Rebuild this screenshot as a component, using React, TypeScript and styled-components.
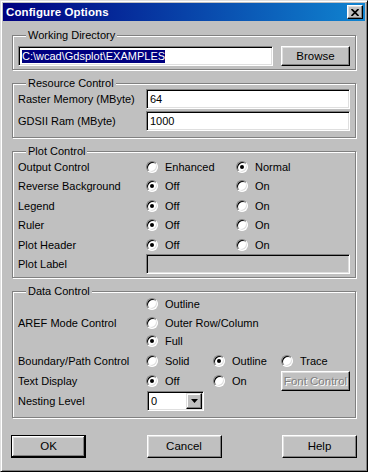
import { Fragment } from "react";
import styled, { createGlobalStyle } from "styled-components";

const GlobalStyle = createGlobalStyle`
  body {
    margin: 0;
    background: #fff;
    font-family: "Liberation Sans", Arial, sans-serif;
    font-size: 11px;
    color: #000;
  }
`;

type Option = { text: string; checked?: boolean };

const plotRows: { label: string; options: Option[] }[] = [
  { label: "Output Control", options: [{ text: "Enhanced" }, { text: "Normal", checked: true }] },
  { label: "Reverse Background", options: [{ text: "Off", checked: true }, { text: "On" }] },
  { label: "Legend", options: [{ text: "Off", checked: true }, { text: "On" }] },
  { label: "Ruler", options: [{ text: "Off", checked: true }, { text: "On" }] },
  { label: "Plot Header", options: [{ text: "Off", checked: true }, { text: "On" }] },
];

const arefOptions: Option[] = [
  { text: "Outline" },
  { text: "Outer Row/Column" },
  { text: "Full", checked: true },
];

const Radio = ({ text, checked = false }: Option) => (
  <RadioWrap>
    <RadioCircle $checked={checked} />
    <span>{text}</span>
  </RadioWrap>
);

const App = () => {
  return (
    <>
      <GlobalStyle />
      <Window>
        <TitleBar>
          <Title>Configure Options</Title>
          <CloseButton>
            <svg width="8" height="7" viewBox="0 0 8 7">
              <path d="M0.5 0 L7.5 7 M7.5 0 L0.5 7" stroke="#000" strokeWidth="1.7" />
            </svg>
          </CloseButton>
        </TitleBar>

        <Body>
          <Group $pad="5px 5px 3px">
            <Legend>Working Directory</Legend>
            <DirRow>
              <Field $width={255}>
                <Selected>C:\wcad\Gdsplot\EXAMPLES</Selected>
              </Field>
              <Button $width={69}>Browse</Button>
            </DirRow>
          </Group>

          <Group $pad="0 5px 6px">
            <Legend>Resource Control</Legend>
            <ResourceGrid>
              <Label>Raster Memory (MByte)</Label>
              <Field>64</Field>
              <Label>GDSII Ram (MByte)</Label>
              <Field>1000</Field>
            </ResourceGrid>
          </Group>

          <Group $pad="0 5px 3px">
            <Legend>Plot Control</Legend>
            <PlotGrid>
              {plotRows.map((row) => (
                <Fragment key={row.label}>
                  <Label>{row.label}</Label>
                  {row.options.map((o) => (
                    <Radio key={o.text} {...o} />
                  ))}
                </Fragment>
              ))}
              <Label>Plot Label</Label>
              <Field $disabled $span>
                {" "}
              </Field>
            </PlotGrid>
          </Group>

          <Group $pad="0 5px 6px">
            <Legend>Data Control</Legend>
            <DataGrid>
              <ArefLabel>AREF Mode Control</ArefLabel>
              {arefOptions.map((o) => (
                <WideCell key={o.text}>
                  <Radio {...o} />
                </WideCell>
              ))}
              <Label>Boundary/Path Control</Label>
              <Radio text="Solid" />
              <Radio text="Outline" checked />
              <Radio text="Trace" />
              <Label>Text Display</Label>
              <Radio text="Off" checked />
              <Radio text="On" />
              <Button $disabled>Font Control</Button>
              <Label>Nesting Level</Label>
              <Combo>
                <ComboText>0</ComboText>
                <ComboButton>
                  <svg width="7" height="4" viewBox="0 0 7 4">
                    <polygon points="0,0 7,0 3.5,4" fill="#000" />
                  </svg>
                </ComboButton>
              </Combo>
            </DataGrid>
          </Group>

          <Footer>
            <Button $width={75} $height={23} $default>
              OK
            </Button>
            <Button $width={75} $height={23}>
              Cancel
            </Button>
            <Button $width={75} $height={23}>
              Help
            </Button>
          </Footer>
        </Body>
      </Window>
    </>
  );
};

export default App;

const Window = styled.div`
  width: 368px;
  height: 472px;
  box-sizing: border-box;
  background: #c0c0c0;
  border: 1px solid;
  border-color: #dfdfdf #000 #000 #dfdfdf;
  box-shadow: inset 1px 1px #fff, inset -1px -1px #808080;
  padding: 2px;
  display: flex;
  flex-direction: column;
`;

const TitleBar = styled.div`
  height: 18px;
  flex-shrink: 0;
  background: linear-gradient(to right, #000080, #1084d0);
  display: flex;
  align-items: center;
  justify-content: space-between;
  padding: 0 2px 0 3px;
`;

const Title = styled.div`
  color: #fff;
  font-weight: bold;
  font-size: 11.5px;
  letter-spacing: 0.1px;
`;

const CloseButton = styled.div`
  width: 16px;
  height: 14px;
  box-sizing: border-box;
  background: #c0c0c0;
  border: 1px solid;
  border-color: #fff #000 #000 #fff;
  box-shadow: inset -1px -1px #808080, inset 1px 1px #dfdfdf;
  display: flex;
  align-items: center;
  justify-content: center;
`;

const Body = styled.div`
  padding: 8px 9px 0;
  display: flex;
  flex-direction: column;
  gap: 7px;
`;

const Group = styled.fieldset<{ $pad: string }>`
  margin: 0;
  min-width: 0;
  border: 1px solid #808080;
  box-shadow: 1px 1px 0 #fff, inset 1px 1px 0 #fff;
  padding: ${(p) => p.$pad};
`;

const Legend = styled.legend`
  margin-left: 8px;
  padding: 0 2px;
  line-height: 12px;
  background: #c0c0c0;
`;

const DirRow = styled.div`
  display: flex;
  justify-content: space-between;
  align-items: center;
  height: 20px;
`;

const Field = styled.div<{ $width?: number; $disabled?: boolean; $span?: boolean }>`
  box-sizing: border-box;
  height: 20px;
  width: ${(p) => (p.$width ? `${p.$width}px` : "auto")};
  grid-column: ${(p) => (p.$span ? "2 / -1" : "auto")};
  background: ${(p) => (p.$disabled ? "#c0c0c0" : "#fff")};
  border: 1px solid;
  border-color: #808080 #fff #fff #808080;
  box-shadow: inset 1px 1px #000, inset -1px -1px #dfdfdf;
  padding: 0 3px;
  display: flex;
  align-items: center;
  white-space: pre;
`;

const Selected = styled.span`
  background: #000080;
  color: #fff;
  line-height: 13px;
`;

const Button = styled.div<{
  $width?: number;
  $height?: number;
  $default?: boolean;
  $disabled?: boolean;
}>`
  box-sizing: border-box;
  width: ${(p) => (p.$width ? `${p.$width}px` : "auto")};
  height: ${(p) => p.$height ?? 20}px;
  background: #c0c0c0;
  border: 1px solid;
  border-color: ${(p) => (p.$default ? "#000" : "#fff #000 #000 #fff")};
  box-shadow: ${(p) =>
    p.$default
      ? "inset -1px -1px #000, inset 1px 1px #fff, inset -2px -2px #808080, inset 2px 2px #dfdfdf"
      : "inset -1px -1px #808080, inset 1px 1px #dfdfdf"};
  display: flex;
  align-items: center;
  justify-content: center;
  color: ${(p) => (p.$disabled ? "#808080" : "#000")};
  text-shadow: ${(p) => (p.$disabled ? "1px 1px 0 #fff" : "none")};
  font-size: 11.5px;
`;

const Label = styled.div`
  white-space: nowrap;
`;

const ResourceGrid = styled.div`
  display: grid;
  grid-template-columns: 128px 1fr;
  grid-auto-rows: 20px;
  row-gap: 2px;
  align-items: center;
`;

const PlotGrid = styled.div`
  display: grid;
  grid-template-columns: 128px 90px 1fr;
  grid-auto-rows: 19.5px;
  align-items: center;
`;

const DataGrid = styled.div`
  margin-top: -2px;
  display: grid;
  grid-template-columns: 128px 67px 68px 1fr;
  grid-template-rows: 18.5px 18.5px 18.5px 20px 20px 20px;
  align-items: center;
`;

const ArefLabel = styled(Label)`
  grid-row: 1 / 4;
  grid-column: 1;
`;

const WideCell = styled.div`
  grid-column: 2 / -1;
`;

const RadioWrap = styled.div`
  display: flex;
  align-items: center;
  gap: 7px;
  white-space: nowrap;
`;

const RadioCircle = styled.span<{ $checked: boolean }>`
  position: relative;
  flex-shrink: 0;
  width: 12px;
  height: 12px;
  box-sizing: border-box;
  border-radius: 50%;
  border: 1px solid;
  border-color: #808080 #fff #fff #808080;
  background: #fff;
  box-shadow: inset 1px 1px #000, inset -1px -1px #dfdfdf;

  &::after {
    content: "";
    display: ${(p) => (p.$checked ? "block" : "none")};
    position: absolute;
    left: 3px;
    top: 3px;
    width: 4px;
    height: 4px;
    border-radius: 50%;
    background: #000;
  }
`;

const Combo = styled.div`
  box-sizing: border-box;
  width: 57px;
  height: 20px;
  margin-left: 1px;
  background: #fff;
  border: 1px solid;
  border-color: #808080 #fff #fff #808080;
  box-shadow: inset 1px 1px #000, inset -1px -1px #dfdfdf;
  padding: 1px;
  display: flex;
  align-items: stretch;
`;

const ComboText = styled.div`
  flex: 1;
  padding-left: 2px;
  display: flex;
  align-items: center;
`;

const ComboButton = styled.div`
  width: 16px;
  box-sizing: border-box;
  background: #c0c0c0;
  border: 1px solid;
  border-color: #dfdfdf #000 #000 #dfdfdf;
  box-shadow: inset -1px -1px #808080, inset 1px 1px #fff;
  display: flex;
  align-items: center;
  justify-content: center;
`;

const Footer = styled.div`
  margin: 10px -1px 0;
  display: flex;
  justify-content: space-between;
`;
